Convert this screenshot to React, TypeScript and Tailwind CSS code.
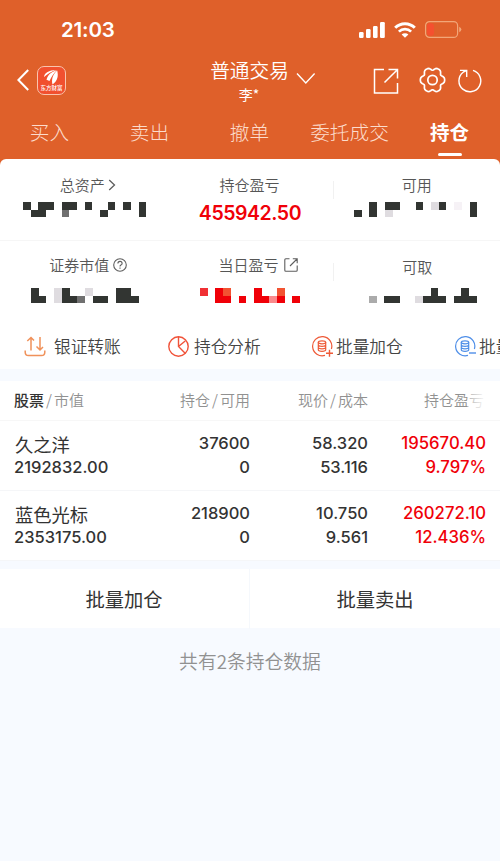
import React from 'react';

const TABS = ['买入', '卖出', '撤单', '委托成交', '持仓'];

const HOLDINGS = [
  {
    name: '久之洋',
    marketValue: '2192832.00',
    amount: '37600',
    available: '0',
    price: '58.320',
    cost: '53.116',
    profit: '195670.40',
    rate: '9.797%'
  },
  {
    name: '蓝色光标',
    marketValue: '2353175.00',
    amount: '218900',
    available: '0',
    price: '10.750',
    cost: '9.561',
    profit: '260272.10',
    rate: '12.436%'
  }
];

const MOSAIC_COLORS: Record<string, string> = {
  '#': '#323532',
  g: '#707070',
  s: '#ababab',
  l: '#dfdce0',
  w: '#f6f2f6',
  r: '#f00008',
  a: '#f03034',
  o: '#f25332',
  p: '#f98a8c'
};

const CELL = 7.7;

// Six-lobed gear outline, lobes pointing left and right
const GEAR_POINTS = Array.from({ length: 72 }, (_, i) => {
  const t = (i * Math.PI) / 36;
  const r = 11.1 + 1.35 * Math.cos(6 * t) - 0.3 * Math.cos(12 * t);
  return `${(13.5 + r * Math.cos(t)).toFixed(2)},${(13 + r * 1.03 * Math.sin(t)).toFixed(2)}`;
}).join(' ');

// Masked amount, one character per cell
function Mosaic({ rows, className }: { rows: string[]; className: string }) {
  return (
    <svg
      width={rows[0].length * CELL}
      height={rows.length * CELL}
      shapeRendering="crispEdges"
      className={className}
    >
      {rows.map((row, y) =>
        row.split('').map((c, x) =>
          c === '.' ? null : (
            <rect key={`${x}-${y}`} x={x * CELL} y={y * CELL} width={CELL} height={CELL} fill={MOSAIC_COLORS[c]} />
          )
        )
      )}
    </svg>
  );
}

function StatusBar() {
  return (
    <div className="flex h-[55px] items-center justify-between pl-[61px] pr-[38px] pt-1">
      <span className="pt-[1px] font-[Inter] text-[20.5px] font-semibold leading-none tracking-[-0.2px]">21:03</span>
      <div className="flex items-center">
        <svg width="26" height="16" viewBox="0 0 26 16" fill="#fff">
          <rect x="0" y="10" width="4.6" height="6" rx="1.2" />
          <rect x="7" y="7" width="4.6" height="9" rx="1.2" />
          <rect x="14" y="4" width="4.6" height="12" rx="1.2" />
          <rect x="21" y="0" width="4.8" height="16" rx="1.2" />
        </svg>
        <svg width="22" height="16" viewBox="0 0 22 16" className="ml-[9px]" fill="none" stroke="#fff">
          <path d="M1.2 5.8a13.8 13.8 0 0 1 19.6 0" strokeWidth="3" />
          <path d="M4.9 9.6a8.6 8.6 0 0 1 12.2 0" strokeWidth="2.7" />
          <path d="M11 15.8 7.6 12.5a4.9 4.9 0 0 1 6.8 0Z" fill="#fff" stroke="none" />
        </svg>
        <svg width="37" height="17" viewBox="0 0 37 17" className="ml-[9px]">
          <rect x="0.6" y="0.6" width="32" height="15.8" rx="4" fill="none" stroke="#f2a678" strokeWidth="1.2" />
          <rect x="2" y="2.2" width="7" height="12.6" rx="3" fill="#f5502f" />
          <path d="M34.2 5.8q2.2 1 2.2 2.7t-2.2 2.7Z" fill="#f2a678" />
        </svg>
      </div>
    </div>
  );
}

function NavBar() {
  return (
    <div className="grid h-[55px] grid-cols-[1fr_auto_1fr]">
      <div className="flex h-[50px] items-center pl-[17px]">
        <svg width="12" height="22" viewBox="0 0 12 22" fill="none" stroke="#fff" strokeWidth="2">
          <path d="M11.2 1 1.4 11l9.8 10" />
        </svg>
        <div className="ml-2 flex h-[29px] w-[29px] flex-col items-center rounded-[7px] border border-[#f9c4ae] bg-[#f1502f]">
          <svg width="17" height="17" viewBox="0 0 17 17" className="mt-[2px] shrink-0" fill="#fff">
            <path d="M1 8C1.500 3.500 6 1.300 13 1 8.500 2.500 5 4.500 1 8Z" />
            <path d="M3.500 10.800C4.800 6 8 3 13.800 1.300 10.500 4.500 8.500 8 6.500 12Z" />
            <path d="M9.500 15.500C8.200 11 9.500 5.500 14.200 1.500 15.500 7 14.800 11.500 9.500 15.500Z" />
          </svg>
          <span className="mt-[-1px] whitespace-nowrap font-['Noto_Sans_CJK_SC',sans-serif] text-[5.5px] font-medium leading-[7px]">
            东方财富
          </span>
        </div>
      </div>
      <div className="relative flex flex-col items-center">
        <span className="text-[19.700px] font-[350] leading-[29px] -translate-x-[0.5px]">普通交易</span>
        <span className="text-[14px] leading-[20px] -translate-x-[1px]">李*</span>
        <svg width="20" height="13" viewBox="0 0 20 13" className="absolute left-[85px] top-[16.5px]" fill="none" stroke="#fff" strokeWidth="1.400">
          <path d="M1 1.500 9.800 11 18.600 1.500" />
        </svg>
      </div>
      <div className="flex h-[50px] items-center justify-end pr-[18px]">
        <svg width="26" height="26" viewBox="0 0 26 26" className="mt-[1px]" fill="none" stroke="#fff" strokeWidth="1.500">
          <path d="M11 1.500H1.500v23.500H24.500V15M15.500 1.500h9v9M24.300 1.700 11.500 14.500" />
        </svg>
        <svg width="27" height="26" viewBox="0 0 27 26" className="ml-5" fill="none" stroke="#fff" strokeWidth="1.700">
          <polygon points={GEAR_POINTS} strokeLinejoin="round" />
          <circle cx="13.500" cy="13" r="4.700" />
        </svg>
        <svg width="24" height="25" viewBox="0 0 24 25" className="ml-3" fill="none" stroke="#fff" strokeWidth="1.400">
          <path d="M15 2.400A10.900 10.900 0 1 1 5.200 4.200L8.700 2.400M2 2.400H8.700V9" />
        </svg>
      </div>
    </div>
  );
}

function TabBar() {
  return (
    <div className="grid h-[49px] grid-cols-5">
      {TABS.map((tab, i) => {
        const active = i === TABS.length - 1;
        return (
          <div
            key={tab}
            className={
              active
                ? 'flex flex-col items-center pr-[1px] text-[19.5px] font-bold leading-[44px]'
                : 'flex flex-col items-center whitespace-nowrap pr-[1px] text-[19.700px] font-light leading-[44px] text-[#fcdccc]'
            }
          >
            {tab}
            {active && <div className="mt-[-1px] h-[3px] w-6 shrink-0 rounded-full bg-white" />}
          </div>
        );
      })}
    </div>
  );
}

function Divider() {
  return <div className="absolute right-[-1px] top-[22px] h-[18px] w-px bg-[#f1f1f1]" />;
}

function Summary() {
  return (
    <div className="text-[15px] font-[350] text-[#565656]">
      <div className="grid h-[82px] grid-cols-3 border-b border-[#f6f6f6]">
        <div className="relative flex flex-col pt-[15px]">
          <div className="flex items-center justify-center pl-[9px] leading-[22px]">
            总资产
            <svg width="8" height="12" viewBox="0 0 8 12" className="ml-[3px]" fill="none" stroke="#5e5e5e" strokeWidth="1.300">
              <path d="M1.200 1 6.500 6l-5.300 5" />
            </svg>
          </div>
          <Mosaic className="ml-[23px] mt-[6px]" rows={['#.##.##.#..#.#.#', '.##..g....#....#']} />
        </div>
        <div className="relative flex flex-col items-center pt-[15px]">
          <div className="pr-[1px] leading-[22px]">持仓盈亏</div>
          <div className="mt-[4px] font-[Inter] text-[19.5px] font-semibold leading-[26px] tracking-[-0.45px] text-[#f00008]">
            455942.50
          </div>
          <Divider />
        </div>
        <div className="flex flex-col pt-[15px]">
          <div className="text-center leading-[22px]">可用</div>
          <Mosaic className="ml-[21px] mt-[6px]" rows={['..#.##..#.l#.w.#', '#.#.l..........#']} />
        </div>
      </div>
      <div className="grid h-[80px] grid-cols-3">
        <div className="flex flex-col pt-[13px]">
          <div className="flex items-center justify-center pl-[10px] leading-[22px]">
            证券市值
            <svg width="14" height="14" viewBox="0 0 14 14" className="ml-[4px]" fill="none" stroke="#5e5e5e" strokeWidth="1.100">
              <circle cx="7" cy="7" r="6.300" />
              <path d="M4.900 5.600Q4.900 3.400 7 3.400t2.100 2q0 1-1.200 1.700-.9.500-.9 1.500" />
              <path d="M7 9.600v1.200" />
            </svg>
          </div>
          <Mosaic className="ml-[31px] mt-[12px]" rows={['#..l#..l...##.', '##.l##g.##.###']} />
        </div>
        <div className="relative flex flex-col pt-[13px]">
          <div className="flex items-center justify-center pl-[16px] leading-[22px]">
            当日盈亏
            <svg width="14" height="14" viewBox="0 0 14 14" className="ml-[5px]" fill="none" stroke="#5e5e5e" strokeWidth="1.100">
              <path d="M5.500.8H1.800Q.8.8.8 1.800v10.400q0 1 1 1h10.400q1 0 1-1V7.500M8.800.8h4.400v4.400M13 1 6 8" />
            </svg>
          </div>
          <Mosaic className="ml-[33px] mt-[12px]" rows={['a.ro...r..o..', '..rr.r.rrpr.r']} />
          <Divider />
        </div>
        <div className="flex flex-col pt-[15px]">
          <div className="pl-[1px] text-center leading-[22px]">可取</div>
          <Mosaic className="ml-[36px] mt-[10px]" rows={['........#...#.', 's.##..l###.###']} />
        </div>
      </div>
    </div>
  );
}

function BatchIcon({ color, plus }: { color: string; plus?: boolean }) {
  return (
    <svg width="21" height="21" viewBox="0 0 21 21" fill="none" stroke={color} strokeWidth="1.200">
      <path d="M13 19.400A9.600 9.600 0 1 1 19.400 13" />
      <ellipse cx="10" cy="6.300" rx="3.700" ry="1.500" />
      <path d="M6.300 6.300v7.500q0 1.500 3.700 1.500t3.700-1.500V6.300M6.300 8.800q0 1.500 3.700 1.500t3.700-1.500M6.300 11.300q0 1.500 3.700 1.500t3.700-1.500" />
      <path d={plus ? 'M14 17.300h7M17.500 13.800v7' : 'M14 17h7'} strokeWidth="1.400" />
    </svg>
  );
}

function QuickActions() {
  return (
    <div className="flex h-[48px] items-center overflow-hidden pl-6 pt-[3px] text-[16.700px] font-[350] text-[#444]">
      <div className="flex w-[144px] shrink-0 items-center">
        <svg width="22" height="21" viewBox="0 0 22 21" fill="none" stroke="#f0915a" strokeWidth="1.500">
          <path d="M1.200 14.500v1.700q0 3.300 3.300 3.300h13q3.300 0 3.300-3.300v-1.700" />
          <path d="M7 14.500V1.500M3.300 5 7 1.500 10 4.500M16 1v13M12.500 10.500 16 14l3-3" />
        </svg>
        <span className="ml-[8px]">银证转账</span>
      </div>
      <div className="flex w-[144px] shrink-0 items-center">
        <svg width="21" height="21" viewBox="0 0 21 21" fill="none" stroke="#f0533a" strokeWidth="1.400">
          <circle cx="10.500" cy="10.500" r="9.700" />
          <path d="M10.500.8v9.700l6.900 6.900M10.500 10.500l6.700-5.500" />
        </svg>
        <span className="ml-[5px]">持仓分析</span>
      </div>
      <div className="flex w-[143px] shrink-0 items-center">
        <BatchIcon color="#ee5a38" plus />
        <span className="ml-[3px]">批量加仓</span>
      </div>
      <div className="flex shrink-0 items-center whitespace-nowrap">
        <BatchIcon color="#4f8fe8" />
        <span className="ml-[3px]">批量卖出</span>
      </div>
    </div>
  );
}

function HoldingsTable() {
  return (
    <div className="mt-3 bg-white">
      <div className="grid h-[40px] grid-cols-[132px_118px_118px_118px] items-center border-b border-[#f7f7f7] text-right text-[15px] font-[350] text-[#919191]">
        <div className="pl-[14px] text-left">
          <span className="font-medium text-[#333]">股票</span>
          <span className="px-[2px]">/</span>市值
        </div>
        <div>持仓<span className="px-[2px]">/</span>可用</div>
        <div>现价<span className="px-[2px]">/</span>成本</div>
        <div className="relative pr-[2px]">
          持仓盈亏
          <div className="absolute inset-y-0 right-0 w-[19px] bg-gradient-to-r from-white/30 to-white" />
        </div>
      </div>
      {HOLDINGS.map(item => (
        <div
          key={item.name}
          className="grid h-[70px] grid-cols-[132px_118px_118px_118px] border-b border-[#f5f6f8] pt-[10px] text-right font-[Inter,'Noto_Sans_CJK_SC',sans-serif] text-[16.500px] font-medium leading-[24px] text-[#333]"
        >
          <div className="pl-[14px] text-left">
            <div className="h-6 pl-[1px] font-['Noto_Sans_CJK_SC',sans-serif] text-[18.300px] font-normal leading-[26px]">
              {item.name}
            </div>
            <div>{item.marketValue}</div>
          </div>
          <div>
            <div>{item.amount}</div>
            <div>{item.available}</div>
          </div>
          <div>
            <div>{item.price}</div>
            <div>{item.cost}</div>
          </div>
          <div className="text-[16.700px] text-[#f00008]">
            <div>{item.profit}</div>
            <div>{item.rate}</div>
          </div>
        </div>
      ))}
    </div>
  );
}

export default function App() {
  return (
    <div className="h-[861px] w-[500px] overflow-hidden bg-[#f7faff] font-['Noto_Sans_CJK_SC',sans-serif]">
      <div className="bg-[#df602a] text-white">
        <StatusBar />
        <NavBar />
        <TabBar />
      </div>
      <div className="bg-[#df602a]">
        <div className="rounded-t-[6px] bg-white">
          <Summary />
          <QuickActions />
        </div>
      </div>
      <HoldingsTable />
      <div className="mt-[8px] grid h-[59px] grid-cols-2 bg-white text-center text-[19.300px] leading-[60px] text-[#333]">
        <div className="border-r border-[#f5f8fc] pr-[1px]">批量加仓</div>
        <div>批量卖出</div>
      </div>
      <div className="pt-[19px] text-center text-[18.800px] font-[350] leading-[28px] text-[#919191]">共有2条持仓数据</div>
    </div>
  );
}
